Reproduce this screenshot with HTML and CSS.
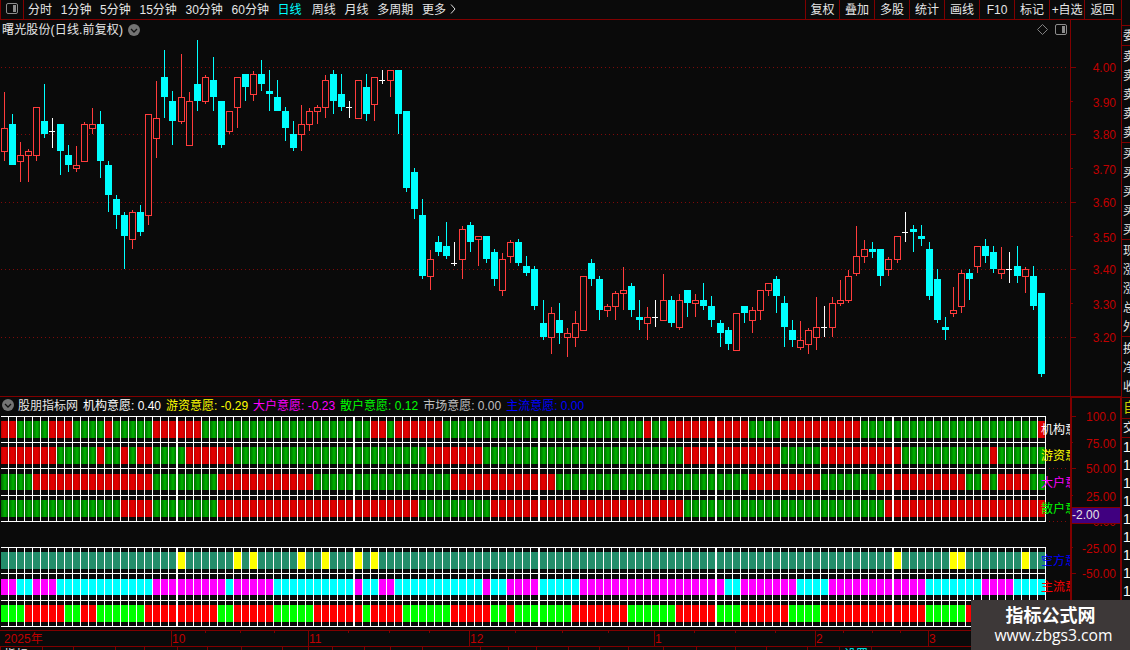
FILE: index.html
```html
<!DOCTYPE html>
<html lang="zh-CN">
<head>
    <meta charset="UTF-8">
    <meta name="viewport" content="width=device-width, initial-scale=1.0">
    <title>曙光股份(日线.前复权)</title>
    <link rel="stylesheet" href="styles.css">
</head>
<body>
    <div class="main">
        <div class="toolbar">
            <div class="panel-toggle">
                <svg width="12" height="12" viewBox="0 0 12 12"><rect x="0.5" y="0.5" width="11" height="10" rx="1.5" fill="none" stroke="#8c8c8c"/><rect x="7" y="2" width="3" height="7" fill="#8c8c8c"/></svg>
            </div>
            <div class="periods">
                <span>分时</span>
                <span>1分钟</span>
                <span>5分钟</span>
                <span>15分钟</span>
                <span>30分钟</span>
                <span>60分钟</span>
                <span class="active">日线</span>
                <span>周线</span>
                <span>月线</span>
                <span>多周期</span>
                <span>更多</span>
                <svg class="more" width="6" height="10" viewBox="0 0 6 10"><path d="M1 0.5L5 5L1 9.5" fill="none" stroke="#e0e0e0"/></svg>
            </div>
            <div class="tools">
                <span>复权</span>
                <span>叠加</span>
                <span>多股</span>
                <span>统计</span>
                <span>画线</span>
                <span>F10</span>
                <span>标记</span>
                <span class="tight">+自选</span>
                <span class="last">返回</span>
            </div>
        </div>

        <div class="price-panel">
            <div class="price-plot">
                <svg id="candles" width="1070" height="376" viewBox="0 20 1070 376"></svg>
                <div class="chart-title">
                    <span>曙光股份(日线.前复权)</span>
                    <svg width="12" height="12" viewBox="0 0 12 12"><circle cx="6" cy="6" r="6" fill="#747474"/><path d="M3 5L6 8L9 5" fill="none" stroke="#111" stroke-width="1.3"/></svg>
                </div>
                <div class="chart-icons">
                    <svg width="11" height="11" viewBox="0 0 11 11"><path d="M5.5 0.5L10.5 5.5L5.5 10.5L0.5 5.5Z" fill="none" stroke="#808080"/></svg>
                    <svg width="12" height="11" viewBox="0 0 12 11"><rect x="0.5" y="0.5" width="11" height="10" rx="1.5" fill="none" stroke="#8c8c8c"/><rect x="7" y="2" width="3" height="7" fill="#8c8c8c"/></svg>
                </div>
            </div>
            <svg id="priceAxis" width="51" height="376" viewBox="1070 20 51 376"></svg>
        </div>

        <div class="indicator-panel">
            <div class="indicator-plot">
                <div class="legend">
                    <svg width="12" height="12" viewBox="0 0 12 12"><circle cx="6" cy="6" r="6" fill="#747474"/><path d="M3 5L6 8L9 5" fill="none" stroke="#111" stroke-width="1.3"/></svg>
                    <span class="name">股朋指标网</span>
                    <span class="white">机构意愿: 0.40</span>
                    <span class="yellow">游资意愿: -0.29</span>
                    <span class="magenta">大户意愿: -0.23</span>
                    <span class="green">散户意愿: 0.12</span>
                    <span class="gray">市场意愿: 0.00</span>
                    <span class="blue">主流意愿: 0.00</span>
                </div>
                <svg id="strips" width="1070" height="215" viewBox="0 415 1070 215"></svg>
            </div>
            <svg id="indicatorAxis" width="51" height="234" viewBox="1070 396 51 234"></svg>
        </div>

        <svg id="timeAxis" width="1121" height="17" viewBox="0 630 1121 17"></svg>
        <div class="bottom-tabs">
            <span>指标</span>
            <svg id="tabTicks" width="1121" height="3" viewBox="0 647 1121 3"></svg>
            <span class="current">设置</span>
        </div>
    </div>

    <div class="quote">
        <div class="blank"></div>
        <div class="group one">委</div>
        <div class="group five"><i>卖</i><i>卖</i><i>卖</i><i>卖</i><i>卖</i></div>
        <div class="group five"><i>买</i><i>买</i><i>买</i><i>买</i><i>买</i></div>
        <div class="group five"><i>现</i><i>涨</i><i>涨</i><i>总</i><i>外</i></div>
        <div class="group three"><i>换</i><i>净</i><i>收</i></div>
        <div class="group own">自</div>
        <div class="group deal">交</div>
        <div class="group times"><i>1</i><i>1</i><i>1</i><i>1</i><i>1</i><i>1</i><i>1</i><i>1</i><i>1</i></div>
    </div>

    <div class="badge">
        <div class="badge-name">指标公式网</div>
        <div class="badge-url">www.zbgs3.com</div>
    </div>

    <script src="script.js"></script>
</body>
</html>
```
FILE: styles.css
```css
* {
    margin: 0;
    padding: 0;
    box-sizing: border-box;
}

body {
    width: 1130px;
    height: 650px;
    overflow: hidden;
    display: flex;
    position: relative;
    background-color: #0a0a0a;
    color: #e6e6e6;
    font-family: "Liberation Sans", "Noto Sans CJK SC", sans-serif;
    font-size: 12px;
    line-height: 18px;
    white-space: nowrap;
}

svg {
    display: block;
    flex-shrink: 0;
}

.main {
    width: 1122px;
    height: 650px;
    flex-shrink: 0;
    border-right: 1px solid #800000;
    display: flex;
    flex-direction: column;
}

/* barra superior */
.toolbar {
    height: 20px;
    flex-shrink: 0;
    display: flex;
    line-height: 20px;
    border-bottom: 1px solid #800000;
}

.panel-toggle {
    width: 24px;
    padding: 3px 0 0 5px;
    border-left: 1px solid #800000;
    border-right: 1px solid #800000;
}

.periods {
    flex: 1;
    display: flex;
    gap: 8.7px;
    padding-left: 4px;
}

.periods .active {
    color: #00ffff;
    margin-right: 1.5px;
}

.periods .more {
    margin: 4px 0 0 -5px;
}

.tools {
    display: flex;
}

.tools span {
    width: 35px;
    border-left: 1px solid #800000;
    text-align: center;
}

.tools span:first-child {
    width: 34px;
}

.tools .tight {
    letter-spacing: -0.2px;
}

.tools .last {
    width: 37px;
    padding-right: 1px;
}

/* velas */
.price-panel {
    height: 376px;
    flex-shrink: 0;
    display: flex;
}

.price-plot {
    position: relative;
}

.chart-title {
    position: absolute;
    left: 2px;
    top: 0;
    display: flex;
    align-items: center;
    gap: 5px;
    line-height: 20px;
    letter-spacing: 0.15px;
}

.chart-title svg {
    margin-top: -1px;
}

.chart-icons {
    position: absolute;
    right: 3px;
    top: 4px;
    display: flex;
    gap: 7px;
}

.indicator-panel {
    height: 234px;
    flex-shrink: 0;
    display: flex;
}

.indicator-plot {
    border-top: 1px solid #800000;
}

.legend {
    height: 18px;
    line-height: 19px;
    display: flex;
    gap: 5px;
    padding-left: 2px;
}

.legend svg {
    margin-top: 2px;
}

.legend .name {
    margin-left: -1px;
}

.white { color: #ffffff; }
.yellow { color: #ffff00; }
.magenta { color: #ff00ff; }
.green { color: #00ff00; }
.gray { color: #c0c0c0; }
.blue { color: #0000ff; }

svg text {
    font-size: 12px;
}

.bottom-tabs {
    height: 3px;
    overflow: hidden;
    position: relative;
    line-height: 16px;
}

.bottom-tabs span {
    position: absolute;
    left: 4px;
    top: 0;
}

.bottom-tabs .current {
    left: 844px;
    color: #00ffff;
}

/* columna de cotización */
.quote {
    width: 8px;
    overflow: hidden;
    color: #e6e6e6;
}

.quote .blank {
    height: 25px;
}

.quote i {
    display: block;
    font-style: normal;
    height: 19px;
    line-height: 20px;
}

.group {
    border-top: 1px solid #800000;
    padding-left: 1px;
}

.one {
    height: 20px;
    line-height: 20px;
}

.five {
    height: 97px;
    padding-top: 1px;
}

.three {
    height: 61px;
    padding-top: 2px;
}

.own {
    height: 21px;
    font-size: 14px;
    color: #cccc00;
    line-height: 19px;
}

.deal {
    height: 19px;
}

.times {
    font-size: 14px;
    color: #ffffff;
}

.times i {
    height: 18px;
    line-height: 19px;
}

.badge {
    position: absolute;
    right: 0;
    bottom: 0;
    width: 159px;
    height: 50px;
    background-color: #3d3838;
    color: #ffffff;
    text-align: center;
}

.badge-name {
    font-family: "Noto Sans CJK SC", sans-serif;
    font-size: 18px;
    font-weight: bold;
    line-height: 20px;
    padding-top: 4px;
}

.badge-url {
    font-family: "Open Sans", "Noto Sans", sans-serif;
    font-size: 15.7px;
    line-height: 22px;
    padding-left: 6px;
}
```
FILE: script.js
```js
// tipo (r = sube, c = baja, w = doji), máximo, cuerpo arriba, cuerpo abajo, mínimo
const velas = `r92,128,152,161 c114,124,165,165 r142,155,162,182 r149,151,156,182 r107,107,156,161 c84,121,134,138
w118,131,131,148 c124,124,151,175 c145,155,165,172 r146,165,169,172 r122,124,162,162 r108,124,129,134
c111,124,161,178 c161,165,195,212 c195,199,215,229 c212,215,236,269 r210,212,240,249 c205,212,232,236
r114,114,216,225 r81,118,139,158 c50,77,97,118 c91,101,121,145 r54,97,122,124 r92,101,146,146
c40,84,101,111 r75,77,102,104 c57,80,97,111 c101,101,145,148 r111,111,132,134 r77,77,108,128
c74,74,87,101 r71,74,95,101 c60,74,84,91 c70,91,94,111 c80,97,111,111 c107,111,128,141
c121,134,148,151 r105,124,135,151 r108,111,125,131 r105,107,112,124 r75,80,108,118 c70,74,101,114
c74,94,107,111 w101,107,107,118 r80,80,119,119 c74,87,114,121 r77,77,105,121 w70,80,80,84
r70,70,81,97 c70,70,114,134 c111,111,188,192 c168,172,209,219 c199,215,276,279 r250,259,277,290
c236,242,252,256 c222,246,256,259 w242,263,263,266 r226,229,260,279 c222,225,242,252 r236,236,240,266
c236,236,259,263 c249,252,279,286 r253,259,291,296 r240,242,257,263 c239,242,263,266 c256,266,273,276
c266,269,306,310 c300,323,337,340 r307,313,338,354 c303,320,333,344 r328,333,338,357 r311,323,338,347
r276,276,331,331 c259,263,279,286 c276,279,310,320 r304,306,311,317 r291,293,307,320 r267,290,294,310
c283,286,310,317 c300,317,320,330 r307,317,324,340 w300,317,317,327 r274,300,321,321 c296,300,323,327
r294,300,328,330 c290,290,303,317 r294,300,304,317 c283,300,306,310 c296,306,320,327 c320,323,333,347
c327,330,344,350 r313,313,351,351 c306,306,313,323 r307,310,321,333 r290,290,311,320 r283,283,291,296
c276,279,296,313 c296,303,327,347 c320,330,340,347 r321,340,348,350 r328,330,345,354 r297,327,338,350
w306,327,327,337 r297,303,328,337 r280,300,304,306 r270,276,301,303 r226,256,274,276 r240,249,257,263
c242,249,252,258 c249,249,276,286 r257,259,270,276 r236,236,260,263 w212,232,232,242 c225,229,232,252
c225,236,239,246 c242,249,296,300 c269,279,320,323 c317,327,330,340 r287,310,314,317 r270,273,307,313
c269,273,279,300 r246,246,267,273 c239,246,256,263 c246,252,269,273 r247,269,274,279 w252,269,269,283
c246,266,276,283 r267,269,277,293 c266,276,306,310 c293,293,374,377`;

// centro horizontal de cada día; la separación gana un píxel cada 22 velas
function centro(i) {
    return 4 + 8 * i + [22, 44, 67, 89, 111].filter(n => i >= n).length;
}

function rect(x, y, w, h, fill) {
    return `<rect x="${x}" y="${y}" width="${w}" height="${h}" fill="${fill}"/>`;
}

function texto(x, y, color, contenido, ancla = 'start') {
    return `<text x="${x}" y="${y}" fill="${color}" text-anchor="${ancla}">${contenido}</text>`;
}

const ROJO = '#800000';
const ETIQUETA = '#c00000';

// --- gráfico de velas ---
let html = '';
[67, 134, 202, 269, 337].forEach(y => {
    html += `<path d="M1 ${y + 0.5}H1068" stroke="#800a0a" stroke-dasharray="1 3"/>`;
});
velas.split(/\s+/).forEach((v, i) => {
    const x = centro(i);
    const [alto, arriba, abajo, bajo] = v.slice(1).split(',').map(Number);
    if (v[0] === 'r') {
        html += rect(x, alto, 1, arriba - alto, '#ff3c3c');
        html += rect(x, abajo, 1, bajo - abajo, '#ff3c3c');
        html += `<rect x="${x - 2.5}" y="${arriba + 0.5}" width="6" height="${abajo - arriba - 1}" fill="#0a0a0a" stroke="#ff3c3c"/>`;
    } else if (v[0] === 'c') {
        html += rect(x, alto, 1, bajo - alto, '#00ffff');
        html += rect(x - 3, arriba, 7, abajo - arriba, '#00ffff');
    } else {
        html += rect(x, alto, 1, bajo - alto, '#ffffff');
        html += rect(x - 3, arriba, 6, 1, '#ffffff');
    }
});
document.getElementById('candles').innerHTML = html;

// --- eje de precios ---
html = rect(1070, 20, 1, 376, ROJO);
[67, 101, 134, 168, 202, 236, 269, 303, 337].forEach((y, i) => {
    html += rect(1071, y, i % 2 ? 2 : 5, 1, ROJO);
});
[72, 107, 139, 174, 207, 242, 274, 309, 342].forEach((y, i) => {
    html += texto(1116, y, ETIQUETA, (4 - i / 10).toFixed(2), 'end');
});
document.getElementById('priceAxis').innerHTML = html;

// --- franjas del indicador ---
const franjas = [
    { y: 421, h: 17, datos: 'r2 g4 r3 g4 r1 g5 r6 g21 r2 g1 r6 g25 r1 g2 r10 g4 r10 g22 r1' },
    { y: 447, h: 17, datos: 'r7 g5 r1 g2 r1 g1 r2 g4 r6 g24 r7 g25 r12 g5 r10 g11 r1 g6' },
    { y: 474, h: 16, datos: 'g4 r15 g8 r12 g17 r13 g24 r9 g7 r11 g2 r1 g1 r4 g2' },
    { y: 500, h: 17, datos: 'g15 r4 g8 r25 g9 r24 g25 r20' },
    { y: 552, h: 17, datos: 't22 y1 t6 y1 t1 y1 t5 y1 t2 y1 t3 y1 t1 y1 t64 y1 t6 y2 t7 y1 t2' },
    { y: 579, h: 16, datos: 'm2 c2 m3 c12 m9 c1 m5 c10 m1 c2 m2 c11 m1 c2 m4 c5 m18 c2 m7 c4 m12 c7 m4 c4' },
    { y: 605, h: 17, datos: 'G3 R5 G2 R2 G6 R9 G2 R5 G5 R6 G1 R4 G6 R5 G2 R1 G7 R7 G6 R5 G3 R6 G4 R13 G5 R10' }
];
const colores = { r: 'url(#rojo)', g: 'url(#verde)', t: '#238e6b', y: '#ffff00', m: '#ff00ff', c: '#00ffff', G: '#00ff00', R: '#ff0000' };

html = `<defs>
    <linearGradient id="rojo"><stop offset="0" stop-color="#bb0000"/><stop offset="0.3" stop-color="#e00000"/><stop offset="0.7" stop-color="#e00000"/><stop offset="1" stop-color="#b00000"/></linearGradient>
    <linearGradient id="verde"><stop offset="0" stop-color="#006c00"/><stop offset="0.5" stop-color="#00aa00"/><stop offset="0.65" stop-color="#00aa00"/><stop offset="1" stop-color="#006c00"/></linearGradient>
</defs>`;
[468, 521].forEach(y => {
    html += `<path d="M1049 ${y + 0.5}H1068" stroke="#800a0a" stroke-dasharray="1 3"/>`;
});
franjas.forEach(f => {
    let i = 0;
    f.datos.split(' ').forEach(tramo => {
        for (let n = Number(tramo.slice(1)); n > 0; n--, i++) {
            html += rect(centro(i) - 3, f.y, 7, f.h, colores[tramo[0]]);
        }
    });
});
[416, 442, 468, 495, 521, 547, 573, 600, 626].forEach(y => {
    html += rect(1, y, 1045, 1, '#ffffff');
});
for (let i = 0; i < 130; i++) {
    const x = centro(i) + 4;
    const ancho = i < 129 ? centro(i + 1) - 3 - x : 1;
    html += rect(x, 416, ancho, 106, '#ffffff');
    html += rect(x, 547, ancho, 80, '#ffffff');
}
[['机构意愿', 434, '#ffffff'], ['游资意愿', 460, '#ffff00'], ['大户意愿', 487, '#ff00ff'], ['散户意愿', 513, '#00ff00'],
 ['空方意愿', 565, '#0000ff'], ['主流意愿', 591, '#ff0000']].forEach(([t, y, color]) => {
    html += texto(1041, y, color, t);
});
document.getElementById('strips').innerHTML = html;

// --- eje del indicador ---
html = rect(1070, 396, 51, 2, ROJO) + rect(1070, 396, 2, 234, ROJO) + rect(1120, 396, 1, 234, ROJO);
[416, 442, 468, 495, 521, 547, 573].forEach((y, i) => {
    html += rect(1072, y, i % 2 ? 1 : 4, 1, ROJO);
});
[['100.0', 421], ['75.00', 448], ['50.00', 473], ['25.00', 501], ['0.00', 526], ['-25.00', 553], ['-50.00', 578]].forEach(([t, y]) => {
    html += texto(1116, y, ETIQUETA, t, 'end');
});
html += rect(1072, 507, 48, 17, ROJO) + rect(1072, 508, 48, 15, '#400080');
html += texto(1072, 519, '#e6e6e6', '-2.00');
document.getElementById('indicatorAxis').innerHTML = html;

// --- eje de tiempo ---
html = rect(0, 630, 1121, 1, ROJO) + rect(0, 646, 1121, 1, ROJO);
[[171, '10'], [308, '11'], [469, '12'], [654, '1'], [815, '2'], [928, '3']].forEach(([x, mes]) => {
    html += rect(x, 631, 1, 15, ROJO) + texto(x + 1, 643, ETIQUETA, mes);
});
html += texto(4, 643, ETIQUETA, '2025年');
[205, 240, 274, 348, 389, 429, 515, 562, 608, 694, 735, 775, 843, 872, 900].forEach(x => {
    html += rect(x, 631, 1, 2, ROJO);
});
document.getElementById('timeAxis').innerHTML = html;

html = '';
[0, 42, 73, 115, 144, 177, 207, 241, 282, 308, 332, 364, 390, 422, 480, 508, 536, 568, 599, 628, 663, 696, 735, 766, 807, 839, 871].forEach(x => {
    html += rect(x, 647, 1, 3, ROJO);
});
document.getElementById('tabTicks').innerHTML = html;
```
